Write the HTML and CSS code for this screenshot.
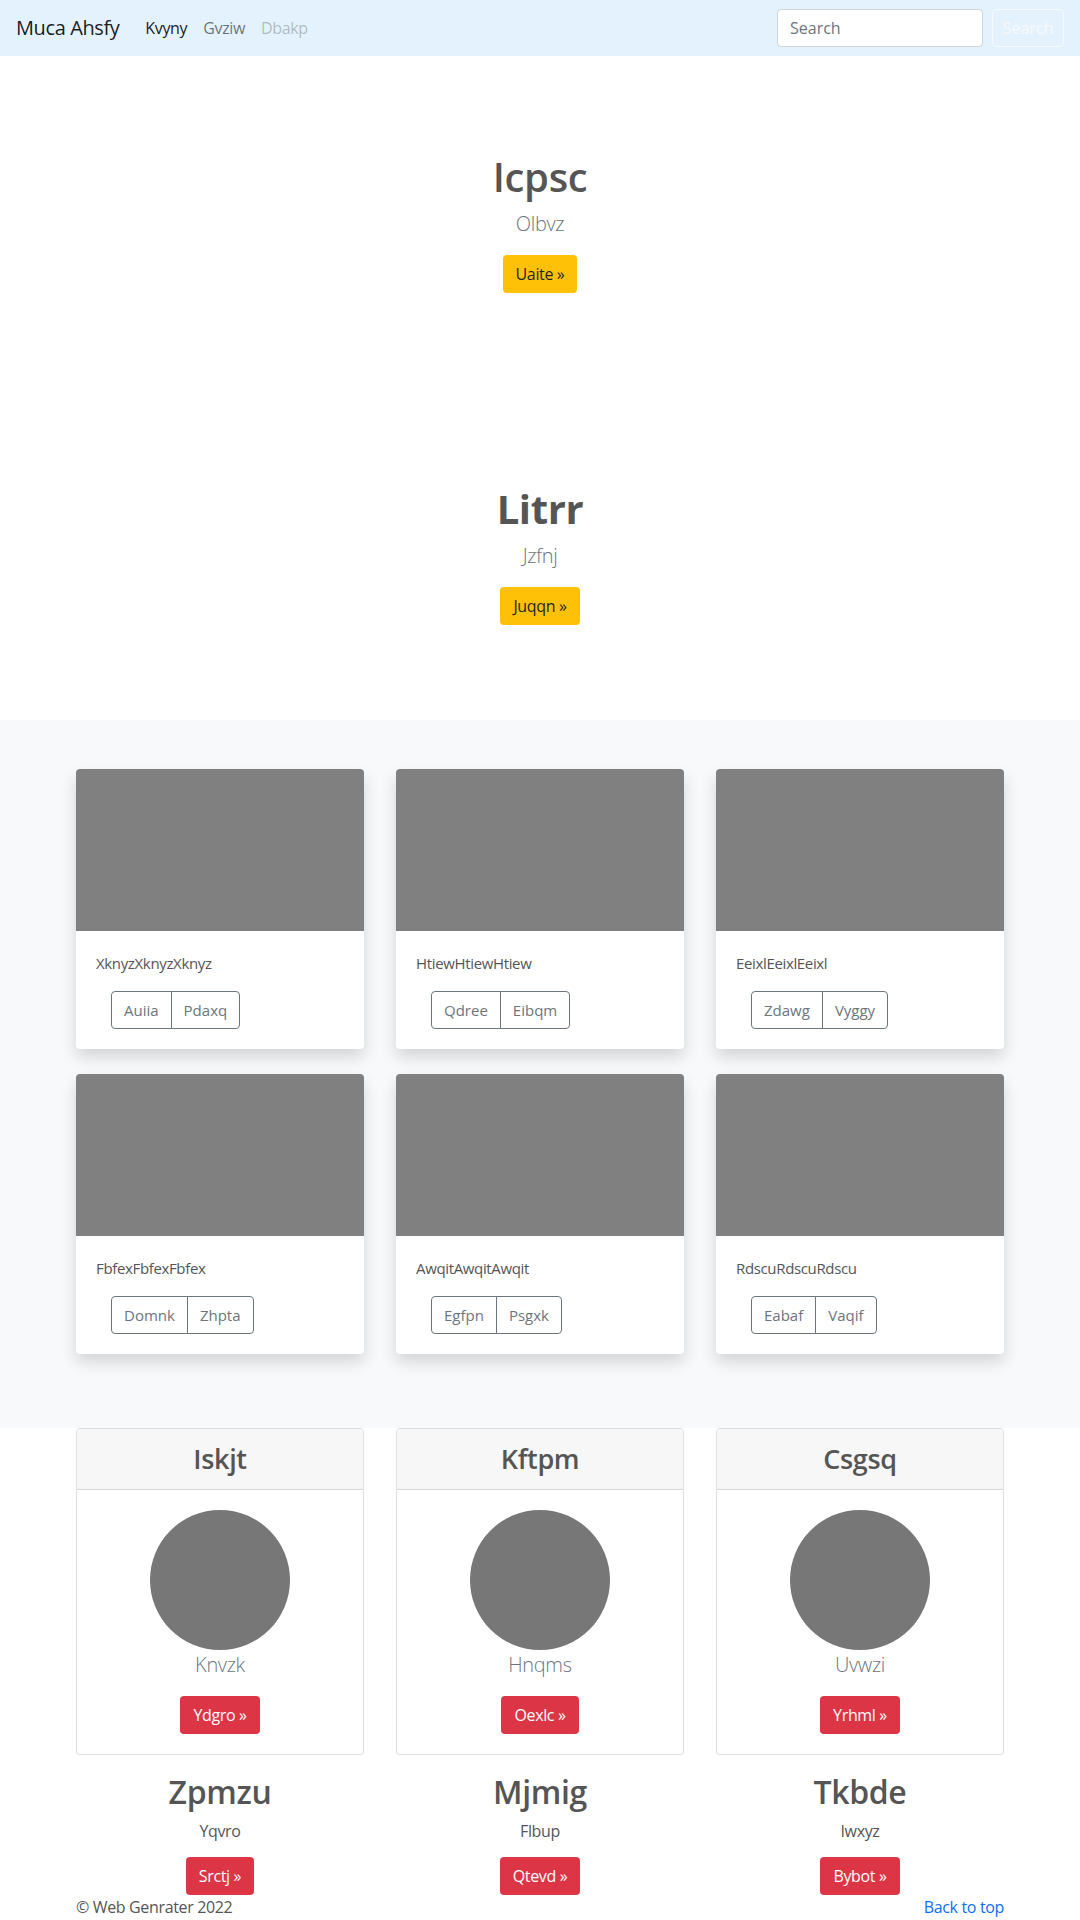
FILE: index.html
```html
<!DOCTYPE html>
<html lang="en">
<head>
<meta charset="utf-8">
<title>Muca Ahsfy</title>
<link rel="stylesheet" href="styles.css">
</head>
<body>
<nav class="navbar">
  <a class="brand" href="#">Muca Ahsfy</a>
  <ul class="nav-links">
    <li><a class="nav-link active" href="#">Kvyny</a></li>
    <li><a class="nav-link" href="#">Gvziw</a></li>
    <li><a class="nav-link disabled" href="#">Dbakp</a></li>
  </ul>
  <form class="search">
    <input class="search-input" type="text" placeholder="Search">
    <button class="search-btn" type="button">Search</button>
  </form>
</nav>

<main>
  <section class="hero">
    <h1 class="hero-title">Icpsc</h1>
    <p class="lead">Olbvz</p>
    <a class="btn btn-warning" href="#">Uaite »</a>
  </section>

  <section class="hero">
    <h1 class="hero-title bold">Litrr</h1>
    <p class="lead">Jzfnj</p>
    <a class="btn btn-warning" href="#">Juqqn »</a>
  </section>

  <section class="album">
    <div class="container grid3 album-grid">
      <div class="card shadow">
        <div class="thumb"></div>
        <div class="card-body">
          <p class="card-text">XknyzXknyzXknyz</p>
          <div class="btn-group"><button class="btn-out">Auiia</button><button class="btn-out">Pdaxq</button></div>
        </div>
      </div>
      <div class="card shadow">
        <div class="thumb"></div>
        <div class="card-body">
          <p class="card-text">HtiewHtiewHtiew</p>
          <div class="btn-group"><button class="btn-out">Qdree</button><button class="btn-out">Eibqm</button></div>
        </div>
      </div>
      <div class="card shadow">
        <div class="thumb"></div>
        <div class="card-body">
          <p class="card-text">EeixlEeixlEeixl</p>
          <div class="btn-group"><button class="btn-out">Zdawg</button><button class="btn-out">Vyggy</button></div>
        </div>
      </div>
      <div class="card shadow">
        <div class="thumb"></div>
        <div class="card-body">
          <p class="card-text">FbfexFbfexFbfex</p>
          <div class="btn-group"><button class="btn-out">Domnk</button><button class="btn-out">Zhpta</button></div>
        </div>
      </div>
      <div class="card shadow">
        <div class="thumb"></div>
        <div class="card-body">
          <p class="card-text">AwqitAwqitAwqit</p>
          <div class="btn-group"><button class="btn-out">Egfpn</button><button class="btn-out">Psgxk</button></div>
        </div>
      </div>
      <div class="card shadow">
        <div class="thumb"></div>
        <div class="card-body">
          <p class="card-text">RdscuRdscuRdscu</p>
          <div class="btn-group"><button class="btn-out">Eabaf</button><button class="btn-out">Vaqif</button></div>
        </div>
      </div>
    </div>
  </section>

  <section class="container grid3 people">
    <div class="card person">
      <div class="card-header"><h3>Iskjt</h3></div>
      <div class="person-body">
        <div class="avatar"></div>
        <p class="person-name">Knvzk</p>
        <a class="btn btn-danger" href="#">Ydgro »</a>
      </div>
    </div>
    <div class="card person">
      <div class="card-header"><h3>Kftpm</h3></div>
      <div class="person-body">
        <div class="avatar"></div>
        <p class="person-name">Hnqms</p>
        <a class="btn btn-danger" href="#">Oexlc »</a>
      </div>
    </div>
    <div class="card person">
      <div class="card-header"><h3>Csgsq</h3></div>
      <div class="person-body">
        <div class="avatar"></div>
        <p class="person-name">Uvwzi</p>
        <a class="btn btn-danger" href="#">Yrhml »</a>
      </div>
    </div>
  </section>

  <section class="container grid3 features">
    <div class="feature">
      <h2>Zpmzu</h2>
      <p>Yqvro</p>
      <a class="btn btn-danger" href="#">Srctj »</a>
    </div>
    <div class="feature">
      <h2>Mjmig</h2>
      <p>Flbup</p>
      <a class="btn btn-danger" href="#">Qtevd »</a>
    </div>
    <div class="feature">
      <h2>Tkbde</h2>
      <p>Iwxyz</p>
      <a class="btn btn-danger" href="#">Bybot »</a>
    </div>
  </section>
</main>

<footer class="container footer">
  <p>© Web Genrater 2022</p>
  <a href="#">Back to top</a>
</footer>
</body>
</html>
```

FILE: styles.css
```css
* { box-sizing: border-box; }

body {
  margin: 0;
  font-family: "Segoe UI", "Open Sans", "Noto Sans", sans-serif;
  font-size: 16px;
  line-height: 1.5;
  letter-spacing: -0.35px;
  color: #555;
  background: #fff;
}

a { text-decoration: none; }

/* navbar */
.navbar {
  display: flex;
  align-items: center;
  height: 56px;
  padding: 0 16px;
  background: #e3f2fd;
}
.brand {
  font-size: 20px;
  color: rgba(0, 0, 0, 0.9);
  margin-right: 18px;
  letter-spacing: -0.4px;
}
.nav-links {
  display: flex;
  list-style: none;
  margin: 0;
  padding: 0;
}
.nav-link {
  display: block;
  padding: 8px;
  color: rgba(0, 0, 0, 0.55);
}
.nav-link.active { color: rgba(0, 0, 0, 0.9); }
.nav-link.disabled { color: rgba(0, 0, 0, 0.25); }

.search {
  margin-left: auto;
  display: flex;
  gap: 9px;
}
.search-input {
  width: 206px;
  height: 38px;
  padding: 6px 12px;
  font: inherit;
  color: #495057;
  border: 1px solid #ced4da;
  border-radius: 4px;
  background: #fff;
}
.search-input::placeholder { color: #6c757d; }
.search-btn {
  width: 72px;
  height: 38px;
  padding: 0;
  font: inherit;
  color: #f8f9fa;
  background: transparent;
  border: 1px solid #f8f9fa;
  border-radius: 4px;
}

/* hero */
.hero {
  padding: 97px 0 95px;
  text-align: center;
}
.hero-title {
  margin: 0 0 8px;
  font-size: 40px;
  line-height: 48px;
  font-weight: 600;
  color: #555;
}
.hero-title.bold { font-weight: 700; }
.lead {
  margin: 0 0 16px;
  font-size: 20px;
  line-height: 30px;
  font-weight: 300;
  color: #6c757d;
}

.btn {
  display: inline-block;
  height: 38px;
  padding: 6px 12px;
  line-height: 24px;
  font-size: 16px;
  border-radius: 4px;
  border: 1px solid transparent;
}
.btn-warning { background: #ffc107; color: #212529; }
.btn-danger { background: #dc3545; color: #fff; }

/* layout */
.container {
  width: 928px;
  margin: 0 auto;
}
.grid3 {
  display: grid;
  grid-template-columns: repeat(3, 1fr);
  column-gap: 32px;
}

/* album */
.album {
  background: #f8f9fa;
  padding: 49px 0 74px;
}
.album-grid { row-gap: 25px; }
.card {
  background: #fff;
  border: 1px solid rgba(0, 0, 0, 0.125);
  border-radius: 4px;
  overflow: hidden;
}
.card.shadow {
  border: 0;
  box-shadow: 0 8px 16px rgba(0, 0, 0, 0.15);
}
.thumb {
  height: 162px;
  background: #808080;
}
.card-body { padding: 20px; }
.card-text {
  margin: 0 0 16px;
  font-size: 15px;
  line-height: 24px;
  color: #555;
}
.btn-group {
  display: inline-flex;
  margin-left: 15px;
}
.btn-out {
  height: 38px;
  padding: 6px 12px;
  font: inherit;
  font-size: 15px;
  color: #6c757d;
  background: transparent;
  border: 1px solid #6c757d;
}
.btn-out:first-child { border-radius: 4px 0 0 4px; }
.btn-out:last-child { border-radius: 0 4px 4px 0; margin-left: -1px; }

/* people */
.people { margin-bottom: 18px; }
.person { text-align: center; }
.card-header {
  background: #f7f7f7;
  border-bottom: 1px solid rgba(0, 0, 0, 0.125);
  padding: 13px 20px;
}
.card-header h3 {
  margin: 0;
  font-size: 27px;
  line-height: 34px;
  font-weight: 600;
  color: #555;
}
.person-body { padding: 20px; }
.avatar {
  width: 140px;
  height: 140px;
  margin: 0 auto;
  border-radius: 50%;
  background: #777;
}
.person-name {
  margin: 0 0 16px;
  font-size: 20px;
  line-height: 30px;
  font-weight: 300;
  color: #6c757d;
}

/* features */
.feature { text-align: center; }
.feature h2 {
  margin: 0 0 8px;
  font-size: 32px;
  line-height: 38px;
  font-weight: 600;
  color: #555;
}
.feature p {
  margin: 0 0 14px;
  color: #555;
}

/* footer */
.footer {
  display: flex;
  justify-content: space-between;
  align-items: center;
}
.footer p { margin: 0; }
.footer a { color: #0d6efd; }
```
